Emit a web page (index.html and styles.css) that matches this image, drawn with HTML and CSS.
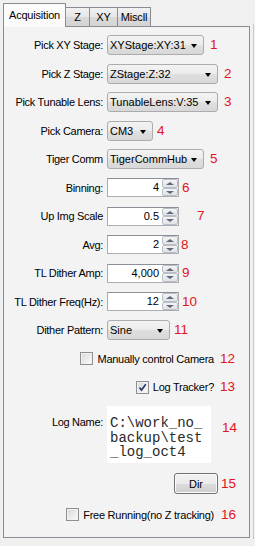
FILE: index.html
```html
<!DOCTYPE html>
<html>
<head>
<meta charset="utf-8">
<link rel="stylesheet" href="styles.css">
</head>
<body>
<div class="window">
  <div class="main">
    <div class="tabs">
      <div class="tab active t-acq">Acquisition</div>
      <div class="tab t-z">Z</div>
      <div class="tab t-xy">XY</div>
      <div class="tab t-misc">Miscll</div>
    </div>
    <div class="panel">
      <div class="row">
        <span class="label">Pick XY Stage:</span>
        <div class="combo w97"><span class="ctext">XYStage:XY:31</span><span class="arrow"></span></div>
        <span class="num">1</span>
      </div>
      <div class="row">
        <span class="label">Pick Z Stage:</span>
        <div class="combo w111"><span class="ctext">ZStage:Z:32</span><span class="arrow"></span></div>
        <span class="num">2</span>
      </div>
      <div class="row">
        <span class="label">Pick Tunable Lens:</span>
        <div class="combo w111"><span class="ctext">TunableLens:V:35</span><span class="arrow"></span></div>
        <span class="num">3</span>
      </div>
      <div class="row">
        <span class="label">Pick Camera:</span>
        <div class="combo w46"><span class="ctext">CM3</span><span class="arrow"></span></div>
        <span class="num g4">4</span>
      </div>
      <div class="row">
        <span class="label">Tiger Comm</span>
        <div class="combo w97"><span class="ctext">TigerCommHub</span><span class="arrow"></span></div>
        <span class="num">5</span>
      </div>
      <div class="row">
        <span class="label">Binning:</span>
        <div class="spin"><span class="val">4</span><span class="btns"><span class="sb up"></span><span class="sb dn"></span></span></div>
        <span class="num g3">6</span>
      </div>
      <div class="row">
        <span class="label">Up Img Scale</span>
        <div class="spin"><span class="val">0.5</span><span class="btns"><span class="sb up"></span><span class="sb dn"></span></span></div>
        <span class="num g18">7</span>
      </div>
      <div class="row">
        <span class="label">Avg:</span>
        <div class="spin"><span class="val">2</span><span class="btns"><span class="sb up"></span><span class="sb dn"></span></span></div>
        <span class="num g2">8</span>
      </div>
      <div class="row">
        <span class="label">TL Dither Amp:</span>
        <div class="spin"><span class="val">4,000</span><span class="btns"><span class="sb up"></span><span class="sb dn"></span></span></div>
        <span class="num g3">9</span>
      </div>
      <div class="row">
        <span class="label">TL Dither Freq(Hz):</span>
        <div class="spin"><span class="val">12</span><span class="btns"><span class="sb up"></span><span class="sb dn"></span></span></div>
        <span class="num g3">10</span>
      </div>
      <div class="row">
        <span class="label">Dither Pattern:</span>
        <div class="combo w63"><span class="ctext">Sine</span><span class="arrow"></span></div>
        <span class="num g4">11</span>
      </div>
      <div class="row">
        <div class="checkgroup">
          <span class="cb"></span>
          <span class="cblabel">Manually control Camera</span>
        </div>
        <span class="num g6">12</span>
      </div>
      <div class="row">
        <div class="checkgroup">
          <span class="cb checked"><svg width="11" height="11" viewBox="0 0 11 11"><path d="M2.5 5.5 L4.5 8 L8.8 2.2" fill="none" stroke="#2b3a6b" stroke-width="1.7"/></svg></span>
          <span class="cblabel">Log Tracker?</span>
        </div>
        <span class="num g6">13</span>
      </div>
      <div class="logrow">
        <span class="label loglabel">Log Name:</span>
        <div class="logbox">C:\work_no_<br>backup\test<br>_log_oct4</div>
        <span class="num lognum">14</span>
      </div>
      <div class="dirrow">
        <div class="btnwrap"><div class="btn">Dir</div></div>
        <span class="num g3">15</span>
      </div>
      <div class="frrow">
        <div class="checkgroup">
          <span class="cb"></span>
          <span class="cblabel">Free Running(no Z tracking)</span>
        </div>
        <span class="num g7">16</span>
      </div>
    </div>
  </div>
  <div class="edge"></div>
</div>
</body>
</html>
```
FILE: styles.css
```css
* { box-sizing: border-box; }

html, body {
  margin: 0;
  padding: 0;
}

body {
  width: 255px;
  height: 546px;
  overflow: hidden;
  background: #f0f0f0;
  font-family: "Liberation Sans", Arial, sans-serif;
  font-size: 11px;
  color: #000;
}

.window {
  display: flex;
  height: 546px;
}

.main {
  width: 250px;
  padding: 3px 0 0 3px;
}

.edge {
  width: 1px;
  margin-left: 3px;
  margin-top: 24px;
  height: 515px;
  background: #c9c9c9;
}

/* Tabs */
.tabs {
  display: flex;
  align-items: flex-end;
  height: 24px;
  position: relative;
  z-index: 2;
}

.tab {
  display: flex;
  align-items: center;
  justify-content: center;
  border: 1px solid #898c95;
  letter-spacing: -0.2px;
}

.tab.active {
  height: 24px;
  border-bottom: 0;
  background: #fbfbfb;
  padding-bottom: 1px;
}

.tab:not(.active) {
  height: 20px;
  margin-left: -1px;
  background: linear-gradient(#f2f2f2, #e6e6e6 50%, #d9d9d9 51%, #d4d4d4);
}

.t-acq { width: 63px; }
.t-z { width: 25px; }
.t-xy { width: 29px; }
.t-misc { width: 34px; }

/* Panel */
.panel {
  position: relative;
  z-index: 1;
  margin-top: -1px;
  width: 247px;
  height: 512px;
  border: 1px solid #898c95;
  background: #f3f3f3;
  padding-top: 4px;
}

.row {
  display: flex;
  align-items: center;
  height: 28.5px;
}

.label {
  width: 99px;
  margin-right: 4px;
  text-align: right;
  white-space: nowrap;
  letter-spacing: -0.3px;
}

.num {
  color: #e3141c;
  font-size: 13.5px;
  margin-left: 6px;
  line-height: 16px;
}

.g2 { margin-left: 2px; }
.g3 { margin-left: 3px; }
.g4 { margin-left: 4px; }
.g6 { margin-left: 6px; }
.g7 { margin-left: 7px; }
.g18 { margin-left: 18px; }

/* Combo */
.combo {
  height: 20px;
  display: flex;
  align-items: center;
  justify-content: space-between;
  border: 1px solid #acacac;
  border-radius: 3px;
  background: linear-gradient(#f3f3f3 0%, #ebebeb 50%, #dfdfdf 51%, #d8d8d8 100%);
  padding: 0 6px 0 2px;
  white-space: nowrap;
}

.w97 { width: 97px; }
.w111 { width: 111px; }
.w46 { width: 46px; }
.w63 { width: 63px; }

.arrow {
  width: 0;
  height: 0;
  border-left: 3.5px solid transparent;
  border-right: 3.5px solid transparent;
  border-top: 4px solid #000;
  margin-top: 2px;
}

/* Spinner */
.spin {
  width: 72px;
  height: 19px;
  display: flex;
  border: 1px solid #abadb3;
  border-top-color: #8d8f96;
  background: #fff;
}

.val {
  flex: 1;
  text-align: right;
  padding-right: 3px;
  line-height: 17px;
}

.btns {
  width: 16px;
  display: flex;
  flex-direction: column;
}

.sb {
  flex: 1;
  position: relative;
  border: 1px solid #b9bfc8;
  border-radius: 2px;
  background: linear-gradient(#f4f4f4, #e2e2e2);
}

.sb::after {
  content: "";
  position: absolute;
  left: 3px;
  width: 0;
  height: 0;
  border-left: 4px solid transparent;
  border-right: 4px solid transparent;
}

.up::after {
  top: 2px;
  border-bottom: 3px solid #5b6a84;
}

.dn::after {
  top: 2px;
  border-top: 3px solid #5b6a84;
}

/* Checkboxes */
.checkgroup {
  width: 210px;
  display: flex;
  align-items: center;
  justify-content: flex-end;
}

.cb {
  width: 13px;
  height: 13px;
  border: 1px solid #8e8f8f;
  background: linear-gradient(135deg, #d8d8d8, #fbfbfb);
  box-shadow: inset 0 0 0 1px #f2f2f2;
  margin-right: 4px;
  display: flex;
  align-items: center;
  justify-content: center;
}

.cblabel {
  white-space: nowrap;
  letter-spacing: -0.25px;
}

/* Log name */
.logrow {
  display: flex;
  align-items: flex-start;
  margin-top: 4.5px;
  height: 57px;
}

.loglabel {
  padding-top: 10px;
}

.logbox {
  width: 104px;
  height: 57px;
  background: #fff;
  color: #2a2a2a;
  font-family: "Liberation Mono", "Courier New", monospace;
  font-size: 14px;
  line-height: 14.5px;
  padding: 10px 0 0 3px;
  white-space: nowrap;
}

.lognum {
  margin-left: 11px;
  padding-top: 14px;
}

/* Dir button */
.dirrow {
  display: flex;
  align-items: center;
  margin-top: 10px;
  height: 21px;
}

.btnwrap {
  width: 214px;
  display: flex;
  justify-content: flex-end;
}

.btn {
  width: 44px;
  height: 21px;
  display: flex;
  align-items: center;
  justify-content: center;
  border: 1px solid #707070;
  border-radius: 3px;
  background: linear-gradient(#f2f2f2 0%, #ebebeb 50%, #dddddd 51%, #cfcfcf 100%);
  box-shadow: inset 0 0 0 1px #fbfbfb;
}

/* Free running */
.frrow {
  display: flex;
  align-items: center;
  margin-top: 10px;
  height: 21px;
}
```
